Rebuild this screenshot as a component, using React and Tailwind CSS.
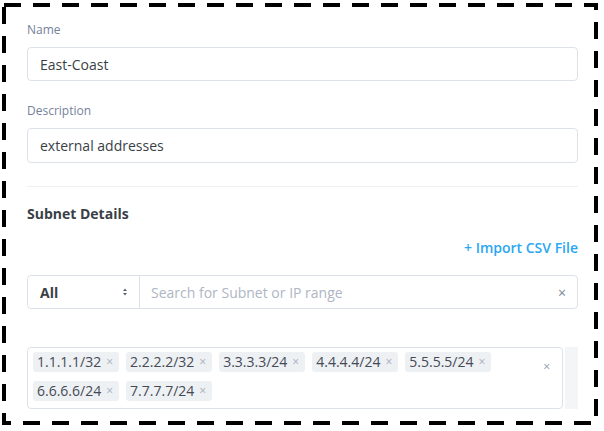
const TAGS = ['1.1.1.1/32', '2.2.2.2/32', '3.3.3.3/24', '4.4.4.4/24', '5.5.5.5/24', '6.6.6.6/24', '7.7.7.7/24'];

const Label = ({ children }) => (
  <label className="block text-[12px] leading-[16px] text-[#74829a]">{children}</label>
);

const TextInput = ({ value, h }) => (
  <div className={`${h} flex items-center border border-[#dde2ea] rounded-[4px] px-[12px] text-[14px] text-[#3a3f47]`}>
    {value}
  </div>
);

const App = () => {
  return (
    <div className="w-[604px] h-[431px] bg-white font-['Open_Sans',sans-serif]">
      <div className="relative ml-[2px] mt-[3px] w-[596px] h-[422px] pl-[25px] pr-[20px] pt-[19px]">
        <svg className="absolute inset-0 pointer-events-none" width="596" height="422">
          <rect x="2" y="2" width="592" height="418" fill="none" stroke="#000" strokeWidth="4" strokeDasharray="17 12" />
        </svg>
        <Label>Name</Label>
        <div className="mt-[9px]">
          <TextInput value="East-Coast" h="h-[34px]" />
        </div>
        <div className="mt-[22px]">
          <Label>Description</Label>
        </div>
        <div className="mt-[9px]">
          <TextInput value="external addresses" h="h-[35px]" />
        </div>
        <div className="mt-[23px] border-t border-[#eef0f3]" />
        <div className="mt-[18px] text-[14px] leading-[18px] font-bold text-[#3a3f47]">Subnet Details</div>
        <div className="mt-[16px] flex justify-end">
          <span className="text-[14px] leading-[18px] font-semibold text-[#2ba7f2]">+ Import CSV File</span>
        </div>
        <div className="mt-[18px] h-[34px] flex border border-[#dde2ea] rounded-[4px]">
          <div className="w-[112px] flex items-center justify-between pl-[12px] pr-[11px] border-r border-[#dde2ea]">
            <span className="text-[14px] font-bold text-[#3a3f47]">All</span>
            <svg width="6" height="10" viewBox="0 0 6 10">
              <path d="M3 1.5 L5 4 H1 Z" fill="#5a6170" />
              <path d="M3 8.5 L5 6 H1 Z" fill="#5a6170" />
            </svg>
          </div>
          <div className="flex-1 flex items-center justify-between pl-[11px] pr-[11px]">
            <span className="text-[14px] text-[#aeb6c3]">Search for Subnet or IP range</span>
            <span className="text-[14px] text-[#7b8494]">×</span>
          </div>
        </div>
        <div className="mt-[38px] flex gap-[2px]">
          <div className="w-[536px] h-[62px] border border-[#dde2ea] rounded-[4px] flex items-start pl-[5px] pt-[4px] pr-[12px]">
            <div className="flex-1 flex flex-wrap gap-x-[7px] gap-y-[9px]">
              {TAGS.map((t) => (
                <div key={t} className="h-[20px] flex items-center gap-[5px] rounded-[3px] bg-[#eef1f4] pl-[4px] pr-[6px]">
                  <span className="text-[14px] leading-[20px] font-medium text-[#454a54]">{t}</span>
                  <span className="text-[12px] text-[#a6aebb]">×</span>
                </div>
              ))}
            </div>
            <span className="mt-[6px] text-[12px] text-[#8d9ab0]">×</span>
          </div>
          <div className="w-[13px] h-[62px] bg-[#f4f5f7]" />
        </div>
      </div>
    </div>
  );
};

export default App;
